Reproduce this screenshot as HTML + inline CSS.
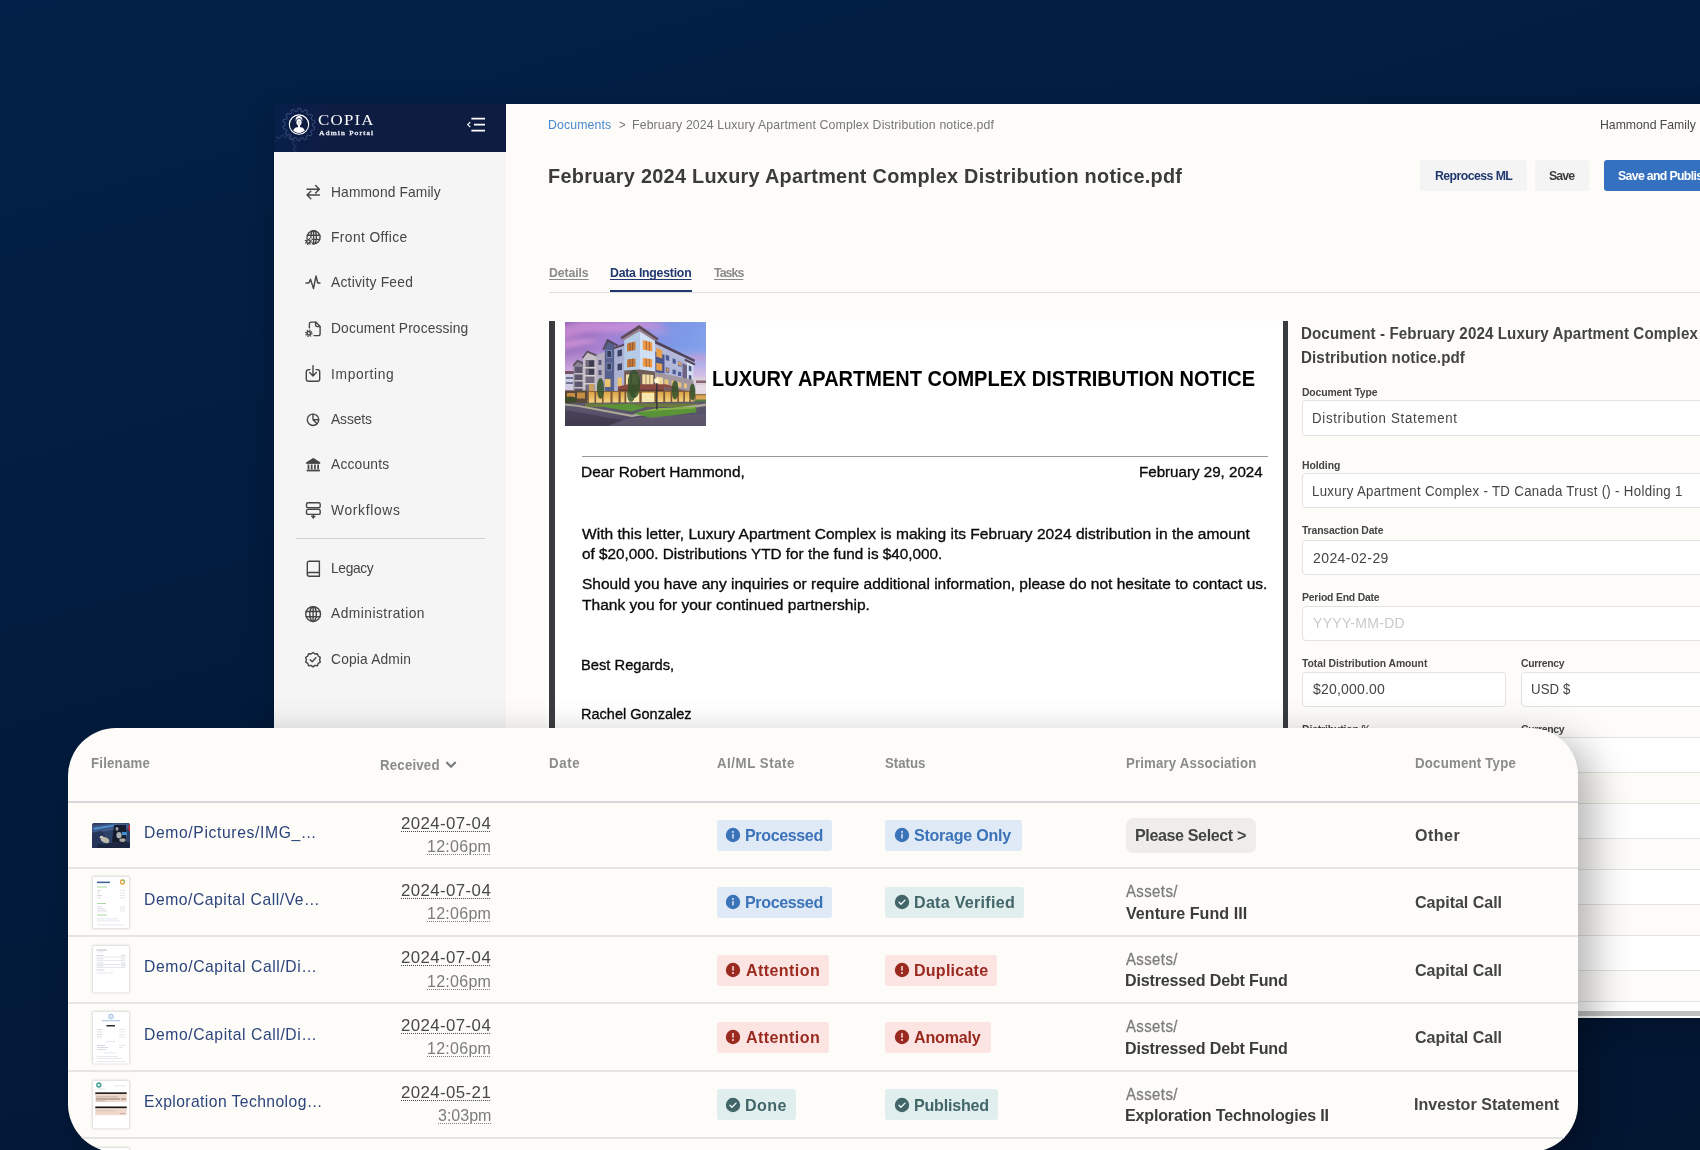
<!DOCTYPE html>
<html lang="en"><head><meta charset="utf-8"><title>Copia Admin Portal</title>
<style>
*{box-sizing:border-box}
html,body{margin:0;padding:0}
body{width:1700px;height:1150px;overflow:hidden;position:relative;font-family:"Liberation Sans",Arial,sans-serif;
 background:linear-gradient(164deg,#022047 0%,#031632 100%)}
.a{position:absolute;white-space:nowrap;display:block;line-height:1;font-weight:400;margin:0;transform-origin:0 50%}
.sf{font-family:"Liberation Serif","Times New Roman",serif}
.abs{position:absolute}
a{text-decoration:none}
#app{position:absolute;left:274px;top:104px;width:1500px;height:913.8px;background:#fdfcf8;overflow:hidden;box-shadow:0 10px 28px rgba(0,0,8,.2)}
#side{position:absolute;left:0;top:0;width:232px;height:913px;background:#f5f5f5}
#brand{position:absolute;left:0;top:0;width:232px;height:47.5px;background:linear-gradient(96deg,#05204a 0,#0b1e47 10%,#0e1c42 24%,#0e1c42 100%);overflow:hidden}
.inp{position:absolute;background:#fff;border:1px solid #e2e2e0;border-radius:4px;height:35px}
.btn{position:absolute;border-radius:3px;height:31px;top:56px}
#card{position:absolute;left:68px;top:728px;width:1510px;height:424px;background:#fdfcf8;border-radius:48px;overflow:hidden}
#cardshadow{position:absolute;left:68px;top:728px;width:1510px;height:424px;border-radius:48px;box-shadow:15px 11px 38px rgba(0,0,5,.29)}
.row{position:absolute;left:0;width:1510px;height:2px;background:#e5e5e3}
.badge{position:absolute;height:31px;border-radius:3px}
.dp{-webkit-text-stroke:.32px #0a0a0a}
.u{text-decoration:underline;text-underline-offset:2px}
.du{text-decoration:underline dotted;text-decoration-thickness:1.2px;text-underline-offset:2px}
</style></head>
<body>
<div id="app">
<aside id="side">
<header id="brand">
<svg class="abs" style="left:2px;top:-2px" width="46" height="50" viewBox="0 0 46 50">
<g fill="none" stroke="#3b4d7c" stroke-width="1.1" stroke-linejoin="round">
<path d="M36.5 24.0L38.9 25.5L38.4 27.8L35.5 28.0L34.6 29.7L36.1 32.1L34.6 33.9L31.9 32.9L30.4 34.0L30.7 36.9L28.5 37.8L26.6 35.7L24.7 36.1L23.7 38.8L21.4 38.7L20.6 36.0L18.7 35.5L16.6 37.5L14.5 36.4L15.0 33.6L13.5 32.3L10.8 33.2L9.4 31.4L11.0 29.0L10.2 27.2L7.4 26.9L6.9 24.6L9.4 23.2L9.5 21.2L7.1 19.7L7.6 17.4L10.5 17.2L11.4 15.5L9.9 13.1L11.4 11.3L14.1 12.3L15.6 11.2L15.3 8.3L17.5 7.4L19.4 9.5L21.3 9.1L22.3 6.4L24.6 6.5L25.4 9.2L27.3 9.7L29.4 7.7L31.5 8.8L31.0 11.6L32.5 12.9L35.2 12.0L36.6 13.8L35.0 16.2L35.8 18.0L38.6 18.3L39.1 20.6L36.6 22.0z" opacity=".8"/>
<path d="M17.4 48.0L19.3 49.7L18.4 51.6L15.9 51.3L14.8 52.6L15.6 55.0L13.9 56.3L11.9 54.7L10.3 55.3L9.7 57.8L7.6 58.0L6.7 55.7L5.0 55.4L3.3 57.3L1.4 56.4L1.7 53.9L0.4 52.8L-2.0 53.6L-3.3 51.9L-1.7 49.9L-2.3 48.3L-4.8 47.7L-5.0 45.6L-2.7 44.7L-2.4 43.0L-4.3 41.3L-3.4 39.4L-0.9 39.7L0.2 38.4L-0.6 36.0L1.1 34.7L3.1 36.3L4.7 35.7L5.3 33.2L7.4 33.0L8.3 35.3L10.0 35.6L11.7 33.7L13.6 34.6L13.3 37.1L14.6 38.2L17.0 37.4L18.3 39.1L16.7 41.1L17.3 42.7L19.8 43.3L20.0 45.4L17.7 46.3z" opacity=".5"/>
</g>
<circle cx="23" cy="22.6" r="9.7" fill="#0e1c42" stroke="#fff" stroke-width="1.1"/>
<g fill="#fff">
<ellipse cx="23" cy="20.2" rx="2.6" ry="3.3"/>
<path d="M19.6 19.2c-.4-3.4 1.2-5.2 3.4-5.2s3.8 1.8 3.4 5.2c-.6-2-1.7-3-3.4-3s-2.800 1-3.400 3z"/>
<path d="M17.2 28.600c.8-2.700 2.900-3.700 5.800-3.700s5 1 5.800 3.700c-1.600 1.500-3.600 2.300-5.800 2.300s-4.200-.8-5.800-2.300z"/>
<rect x="22" y="23" width="2" height="2.600"/>
</g>
<g stroke="#0e1c42" stroke-width=".5" fill="none"><path d="M21.8 19.800h.9M23.500 19.800h.9M22.400 21.800h1.300"/></g>
</svg>
<span class="a sf" style="left:44.15px;top:8.09px;font-size:15.3px;color:#fbfbfd;letter-spacing:1.1px;transform:scaleX(1.1042);">COPIA</span>
<span class="a sf" style="left:45.35px;top:25.54px;font-size:7px;color:#f3f4f8;letter-spacing:1.035px;transform:scaleX(1.1000);-webkit-text-stroke:.3px #f3f4f8;">Admin Portal</span>
<svg class="abs" style="left:192px;top:12px" width="22" height="18" viewBox="0 0 22 18">
<g stroke="#fff" stroke-width="1.7" fill="none"><path d="M5.4 2.600H19M8 8.600H19M5.4 14.600H19"/><path d="M4.300 6.200L1.700 8.600l2.600 2.400" stroke-width="1.100"/></g></svg>
</header>
<nav>
<svg class="abs" style="left:31.2px;top:80.4px" width="16" height="16" viewBox="0 0 16 16" overflow="visible" fill="none" stroke="#454545" stroke-width="1.4" stroke-linecap="round" stroke-linejoin="round"><path d="M2 5.300h12.400M10.600 1.500l3.800 3.800-3.800 3.800M14.400 11H2M5.800 7.200L2 11l3.800 3.800"/></svg>
<a class="a" style="left:56.51px;top:80.64px;font-size:14.6px;color:#454545;letter-spacing:0.131px;transform:scaleX(0.9450);">Hammond Family</a>
<svg class="abs" style="left:31.2px;top:126.0px" width="16" height="16" viewBox="0 0 16 16" overflow="visible" fill="none" stroke="#454545" stroke-width="1.4" stroke-linecap="round" stroke-linejoin="round"><circle cx="8.600" cy="7.300" r="6.500"/><ellipse cx="8.600" cy="7.300" rx="2.800" ry="6.500"/><path d="M2.600 5.200h12M2.600 9.400h12M8.600 .8v13"/><circle cx="3.400" cy="11.400" r="4" fill="#f5f5f5" stroke="none"/><circle cx="3.400" cy="11.400" r="2.500" fill="#454545" stroke="none"/><circle cx="3.400" cy="11.400" r="3.100" fill="none" stroke="#454545" stroke-width="1.300" stroke-dasharray="1.220 1.215" stroke-linecap="butt"/><circle cx="3.400" cy="11.400" r=".95" fill="#f5f5f5" stroke="none"/></svg>
<a class="a" style="left:56.51px;top:126.24px;font-size:14.6px;color:#454545;letter-spacing:0.429px;transform:scaleX(0.9450);">Front Office</a>
<svg class="abs" style="left:31.2px;top:171.2px" width="16" height="16" viewBox="0 0 16 16" overflow="visible" fill="none" stroke="#454545" stroke-width="1.4" stroke-linecap="round" stroke-linejoin="round"><path d="M1 8h2.800l1.700-3.800 3 9.400 2.500-12.600 1.800 7h2.200"/></svg>
<a class="a" style="left:57.45px;top:171.44px;font-size:14.6px;color:#454545;letter-spacing:0.253px;transform:scaleX(0.9450);">Activity Feed</a>
<svg class="abs" style="left:31.2px;top:216.8px" width="16" height="16" viewBox="0 0 16 16" overflow="visible" fill="none" stroke="#454545" stroke-width="1.4" stroke-linecap="round" stroke-linejoin="round"><path d="M4.400 6.800V3c0-1.100.800-1.900 1.900-1.900h4.500l4.300 4.300v7.300c0 1.100-.8 1.900-1.900 1.900H9"/><path d="M10.600 1.300v2.800c0 .9.600 1.500 1.500 1.500h2.800"/><circle cx="3.800" cy="12.300" r="4" fill="#f5f5f5" stroke="none"/><circle cx="3.800" cy="12.300" r="2.500" fill="#454545" stroke="none"/><circle cx="3.800" cy="12.300" r="3.100" fill="none" stroke="#454545" stroke-width="1.300" stroke-dasharray="1.220 1.215" stroke-linecap="butt"/><circle cx="3.800" cy="12.300" r=".95" fill="#f5f5f5" stroke="none"/></svg>
<a class="a" style="left:56.51px;top:217.04px;font-size:14.6px;color:#454545;letter-spacing:0.132px;transform:scaleX(0.9450);">Document Processing</a>
<svg class="abs" style="left:31.2px;top:262.4px" width="16" height="16" viewBox="0 0 16 16" overflow="visible" fill="none" stroke="#454545" stroke-width="1.4" stroke-linecap="round" stroke-linejoin="round"><path d="M5 3.600H3.600C2.200 3.600 1.300 4.500 1.300 5.900v7c0 1.400.9 2.300 2.300 2.300h8.800c1.400 0 2.300-.9 2.300-2.300v-7c0-1.400-.9-2.300-2.300-2.300H11"/><path d="M8-.3v9.800M4.700 6.600L8 9.900l3.300-3.300"/></svg>
<a class="a" style="left:56.51px;top:262.64px;font-size:14.6px;color:#454545;letter-spacing:0.696px;transform:scaleX(0.9450);">Importing</a>
<svg class="abs" style="left:31.2px;top:308.1px" width="16" height="16" viewBox="0 0 16 16" overflow="visible" fill="none" stroke="#454545" stroke-width="1.4" stroke-linecap="round" stroke-linejoin="round"><circle cx="8" cy="7.800" r="5.700"/><path d="M8 2.100v5.700l4 4M8 7.800h5.700"/></svg>
<a class="a" style="left:57.45px;top:308.34px;font-size:14.6px;color:#454545;letter-spacing:-0.087px;transform:scaleX(0.9450);">Assets</a>
<svg class="abs" style="left:31.2px;top:353.0px" width="16" height="16" viewBox="0 0 16 16" overflow="visible" fill="none" stroke="#454545" stroke-width="1.4" stroke-linecap="round" stroke-linejoin="round"><path d="M1.700 5.400L8.300 1.300l6.600 4.100v1.100H1.700z" fill="#454545" stroke-width=".8"/><path d="M3.500 7.400v4.800M6.700 7.400v4.800M9.900 7.400v4.800M13.100 7.400v4.800" stroke-width="1.700" stroke-linecap="butt"/><path d="M1.700 13.500h13.200" stroke-width="1.800" stroke-linecap="butt"/></svg>
<a class="a" style="left:57.45px;top:353.24px;font-size:14.6px;color:#454545;letter-spacing:0.219px;transform:scaleX(0.9450);">Accounts</a>
<svg class="abs" style="left:31.2px;top:398.6px" width="16" height="16" viewBox="0 0 16 16" overflow="visible" fill="none" stroke="#454545" stroke-width="1.4" stroke-linecap="round" stroke-linejoin="round"><rect x="1.500" y="-.2" width="13.700" height="5" rx="1.500"/><rect x="1.500" y="6.400" width="13.700" height="5" rx="1.500"/><path d="M8.300 11.500v3.300"/><path d="M6.300 13.300l2 2.200 2-2.200z" fill="#454545" stroke-width=".6"/></svg>
<a class="a" style="left:57.45px;top:398.84px;font-size:14.6px;color:#454545;letter-spacing:0.731px;transform:scaleX(0.9450);">Workflows</a>
<svg class="abs" style="left:31.2px;top:456.5px" width="16" height="16" viewBox="0 0 16 16" overflow="visible" fill="none" stroke="#454545" stroke-width="1.4" stroke-linecap="round" stroke-linejoin="round"><path d="M2.300 13.200V2c0-1.100.7-1.800 1.800-1.800h10.300v11.300H4.200c-1.100 0-1.900.7-1.900 1.800s.8 1.900 1.900 1.900h10.200"/><path d="M14.400 11.500v3.700"/></svg>
<a class="a" style="left:56.51px;top:456.74px;font-size:14.6px;color:#454545;letter-spacing:-0.36px;transform:scaleX(0.9450);">Legacy</a>
<svg class="abs" style="left:31.2px;top:502.0px" width="16" height="16" viewBox="0 0 16 16" overflow="visible" fill="none" stroke="#454545" stroke-width="1.4" stroke-linecap="round" stroke-linejoin="round"><circle cx="8.100" cy="8.100" r="7.400"/><ellipse cx="8.100" cy="8.100" rx="3.300" ry="7.400"/><path d="M1.300 5.500h13.600M1.300 10.700h13.600M8.100 .7v14.800"/></svg>
<a class="a" style="left:57.45px;top:502.24px;font-size:14.6px;color:#454545;letter-spacing:0.498px;transform:scaleX(0.9450);">Administration</a>
<svg class="abs" style="left:31.2px;top:547.6px" width="16" height="16" viewBox="0 0 16 16" overflow="visible" fill="none" stroke="#454545" stroke-width="1.4" stroke-linecap="round" stroke-linejoin="round"><path d="M8 .5l2 1.500 2.400-.3.800 2.300 2.100 1.300-.7 2.400.7 2.400-2.100 1.300-.8 2.300-2.400-.3L8 14.900l-2-1.500-2.400.3-.8-2.300L.7 10.100l.7-2.400-.7-2.400 2.100-1.300.8-2.300L6 2z"/><path d="M5.200 7.700l2 2 3.700-3.900"/></svg>
<a class="a" style="left:57.45px;top:547.84px;font-size:14.6px;color:#454545;letter-spacing:0.181px;transform:scaleX(0.9450);">Copia Admin</a>
<div class="abs" style="left:22px;top:433.5px;width:189px;height:1px;background:#cfcfcf"></div>
</nav>
</aside>
<main>
<nav class="crumbs">
<a class="a" style="left:274.2px;top:14.4px;font-size:13px;color:#4c88cf;letter-spacing:0.15px;transform:scaleX(0.9450);">Documents</a>
<span class="a" style="left:345.35px;top:15.04px;font-size:12px;color:#777;transform:scaleX(0.9450);">&gt;</span>
<span class="a" style="left:357.6px;top:14.4px;font-size:13px;color:#777;letter-spacing:0.155px;transform:scaleX(0.9450);">February 2024 Luxury Apartment Complex Distribution notice.pdf</span>
<span class="a" style="left:1325.8px;top:14.4px;font-size:13px;color:#4a4a4a;letter-spacing:-0.031px;transform:scaleX(0.9450);">Hammond Family</span>
</nav>
<h1 class="a" style="left:274.2px;top:60.72px;font-size:21px;font-weight:700;color:#3b3b3b;letter-spacing:0.298px;transform:scaleX(0.9450);">February 2024 Luxury Apartment Complex Distribution notice.pdf</h1>
<div class="btn" style="left:1146px;width:107px;background:#f4f4f4"></div>
<span class="a" style="left:1160.85px;top:64.7px;font-size:13px;font-weight:700;color:#21386f;letter-spacing:-0.59px;transform:scaleX(0.9450);">Reprocess ML</span>
<div class="btn" style="left:1260.7px;width:54.5px;background:#f4f4f4"></div>
<span class="a" style="left:1274.65px;top:64.7px;font-size:13px;font-weight:700;color:#3b3b3b;letter-spacing:-0.908px;transform:scaleX(0.9450);">Save</span>
<div class="btn" style="left:1329.5px;width:140px;background:#3571c1"></div>
<span class="a" style="left:1343.75px;top:64.7px;font-size:13px;font-weight:700;color:#fff;letter-spacing:-0.698px;transform:scaleX(0.9450);">Save and Publish</span>
<a class="a u" style="left:275.15px;top:162.4px;font-size:13px;font-weight:700;color:#8a8a8a;letter-spacing:-0.103px;transform:scaleX(0.9450);">Details</a>
<a class="a u" style="left:336.45px;top:162.4px;font-size:13px;font-weight:700;color:#21386f;letter-spacing:-0.244px;transform:scaleX(0.9450);">Data Ingestion</a>
<a class="a u" style="left:439.95px;top:162.4px;font-size:13px;font-weight:700;color:#8a8a8a;letter-spacing:-0.981px;transform:scaleX(0.9450);">Tasks</a>
<div class="abs" style="left:275px;top:188.0px;width:1200px;height:1px;background:#dedede"></div>
<div class="abs" style="left:336.3px;top:185.7px;width:82px;height:2.5px;background:#21386f"></div>
<section class="doc">
<div class="abs" style="left:272px;top:216.8px;width:740px;height:420px;background:#fff"></div>
<div class="abs" style="left:275px;top:217.2px;width:6px;height:420px;background:#3b3c3f"></div>
<div class="abs" style="left:1009px;top:217.2px;width:5px;height:420px;background:#393c3f"></div>
<svg class="abs" style="left:291px;top:218px" width="141" height="104" viewBox="0 0 141 104">
<defs>
<linearGradient id="sky" x1="0" y1="0" x2="1" y2=".35"><stop offset="0" stop-color="#8f62b2"/><stop offset=".3" stop-color="#a67fd0"/><stop offset=".55" stop-color="#8590e0"/><stop offset=".8" stop-color="#7d9ae8"/><stop offset="1" stop-color="#86a2ec"/></linearGradient>
<linearGradient id="hz" x1="0" y1="0" x2="0" y2="1"><stop offset="0" stop-color="#e2bfe4" stop-opacity="0"/><stop offset=".75" stop-color="#e4c4e6" stop-opacity=".95"/><stop offset="1" stop-color="#ecd2e8"/></linearGradient>
<linearGradient id="rd" x1="0" y1="0" x2="0" y2="1"><stop offset="0" stop-color="#5f596b"/><stop offset=".5" stop-color="#57516a"/><stop offset="1" stop-color="#413c50"/></linearGradient>
<linearGradient id="shop" x1="0" y1="0" x2="0" y2="1"><stop offset="0" stop-color="#dca244"/><stop offset="1" stop-color="#f5da8c"/></linearGradient>
<filter id="b1" x="-5%" y="-5%" width="110%" height="110%"><feGaussianBlur stdDeviation=".62"/></filter>
<filter id="b2" x="-20%" y="-20%" width="140%" height="140%"><feGaussianBlur stdDeviation="2.200"/></filter>
<clipPath id="pc"><rect width="141" height="104"/></clipPath>
</defs>
<g clip-path="url(#pc)">
<rect width="141" height="104" fill="url(#sky)"/>
<g filter="url(#b2)">
<path d="M-4 6c10-6 26-8 42-5 12 2 22-2 36-2 12 0 20 3 30 6-12 1-22 2-34 4-16 3-30-1-44 1-12 2-20 5-30 9z" fill="#cf92d8" opacity=".75"/>
<path d="M-4 20c12-4 26-4 40-1-12 3-26 5-40 10z" fill="#d99ad8" opacity=".7"/>
<path d="M84 9c8-2 16-1 22 1-6 2-14 3-22 2z" fill="#c79be0" opacity=".6"/>
<path d="M118 36c8-3 16-4 24-3v5c-8 0-16 1-24 2z" fill="#b78fd0" opacity=".8"/>
<rect x="-4" y="26" width="150" height="42" fill="url(#hz)"/>
</g>
<g filter="url(#b1)">
<path d="M-1 50.500h10.500V68H-1z" fill="#cfcbe0"/><path d="M-1 49h11v3H-1z" fill="#6f5265"/>
<path d="M1 55h7v2H1zM1 60h7v2H1z" fill="#6e7596"/>
<path d="M128 55h14v26h-14z" fill="#d9cfdc"/><path d="M131 58.500h11v2.500h-11z" fill="#8a6670"/><path d="M131 63h10v8h-10z" fill="#e6dbe2"/>
<path d="M8.600 41l4-3.500 6 2.500V80H8.600z" fill="#8a8497"/>
<path d="M7.600 43.500l4.800-5.800 7.800 3.600-.6 1.700-7-3-3.800 4.600z" fill="#5b4f63"/>
<path d="M10 45h7v33h-7z" fill="#5a566c"/><path d="M9.500 51h8.500v1.500H9.500zM9.500 58h8.500v1.500H9.500zM9.500 65h8.500v1.500H9.500z" fill="#c9c1c6"/>
<path d="M18 34l4.500-5 9.500 4v47H18z" fill="#c7bfc8"/>
<path d="M16.600 35.800l5.600-7.400 12 5-.7 1.800-11-4.400-4.400 5.800z" fill="#5c4f60"/>
<path d="M20.500 38h9v40h-9z" fill="#726b7c"/><path d="M19.500 45h11v1.600h-11zM19.500 53h11v1.600h-11zM19.500 61h11v1.600h-11z" fill="#d8cfd0"/>
<path d="M24 38.500h5v6h-5zM24 47h5v5.500h-5z" fill="#3c3a50"/>
<path d="M31.500 33l8.500-3.500V80h-8.500z" fill="#b3adbf"/>
<path d="M33.500 38h3v5h-3zM33.500 48h3v5h-3z" fill="#55577a"/>
<path d="M39.800 26l2.700-7.500 7 4.500V80h-9.700z" fill="#57608c"/>
<path d="M37.300 27.500l5-10.700 10.700 6-.8 1.800-9.400-5.200-3.800 8.600z" fill="#4f4558"/>
<path d="M41.500 28h5.500v8h-5.500zM41.500 40.500h5.500v8h-5.500z" fill="#7f8cb8"/><path d="M42.300 29h3.800v6h-3.800zM42.300 41.500h3.800v6h-3.800z" fill="#343a5c"/>
<path d="M49.300 26l10-3V80h-10z" fill="#a9b0d2"/>
<path d="M48.500 25.300l11-3.800v2.200l-11 3.600z" fill="#5a4c5c"/>
<path d="M52.500 28.500l4.500-1.300v6.500l-4.500 1zM52.500 42l4.500-.8v6.500l-4.500.8z" fill="#3a4266"/>
<path d="M59.200 17.500L74.600 7.500v41.500l-15.400 1z" fill="#b4cce6"/>
<path d="M74.600 7.500L90 18.500V50l-15.400-1z" fill="#cfe0f5"/>
<path d="M55.300 15.300L74.200 3 93.600 16.600l-1.300 1.900L74.300 7 56.700 17.300z" fill="#5d4b57"/>
<path d="M57.300 17.200L74.300 6.600l17.600 11.900-.9 1.300-16.700-10.600-16 9.500z" fill="#9a828c"/>
<path d="M62 21.400l8.500-2v8.400l-8.500 1.600zM62 37.400l8.500-1v8l-8.500 1z" fill="#c77b3c"/>
<path d="M64.600 20.800l.7-.2v8.400l-.7.200zM67.400 20.200l.7-.2v8.400l-.7.200zM64.600 37l.7-.1v8l-.7.100zM67.400 36.700l.7-.1v8l-.7.100z" fill="#7d4a2c"/>
<path d="M77.800 18l9.500 2.600v9L77.800 27.500zM77.800 36l9.500 1.200v8.200L77.800 44.600z" fill="#ee9a46"/>
<path d="M80.800 18.800l.8.200v9l-.8-.2zM83.900 19.600l.8.200v9l-.8-.2zM80.800 36.400l.8.100v8.200l-.8-.1zM83.900 36.800l.8.100v8.200l-.8-.1z" fill="#9a5a30"/>
<path d="M90 20.300l38.400 19V80H90z" fill="#b3b7d9"/>
<path d="M90 18.300l40 19.400-.8 2.300L90 21.500z" fill="#51455a"/>
<path d="M90.400 29.500l9.100 3.500v18.500l-9.100-1z" fill="#49558d"/>
<path d="M91.300 25.800l5.900 2.400v8.200l-5.900-1.800zM91.300 40.700l5.900 1.200v7l-5.900-.8z" fill="#e9a04c"/>
<path d="M100.800 32.500l3.400 1.400v5.200l-3.400-1zM107.600 36.200l3.200 1.300v4.600l-3.200-.9zM113 39l3.400 1.400v4.400L113 43.900zM100.800 45.300l3.400.7v5l-3.400-.6zM107.600 47.400l3.200.6v4.500l-3.200-.5zM113 49.600l3.200.6v4l-3.200-.5zM101.500 58.500h3.500v4.800h-3.500z" fill="#4b5a92"/>
<path d="M113.300 39.400l2.800 1.100v3.400l-2.800-.8zM101.600 46l2 .4v3.600l-2-.3z" fill="#d9a25c"/>
<path d="M117.500 41l4.500 2.200V70h-4.500z" fill="#6e6585"/>
<path d="M122 38.500l6.400 3V72H122z" fill="#d5def0"/>
<path d="M120 36.600l10.300 4.800-.7 2L119.600 38.800z" fill="#54475a"/>
<path d="M123.800 43.500l2.600 1v5l-2.600-.7zM123.800 53l2.600.5v5l-2.600-.4z" fill="#4a5580"/>
<path d="M59.200 48.500l15.400-1L90 49.500V66H59.200z" fill="#6d5c58"/>
<path d="M90 50l38.400 8v12H90z" fill="#a2969f"/><path d="M99.500 57l4 .8v6l-4-.5zM106.500 58.500l3.500.7v5.300l-3.500-.4zM113 60l3.300.6v4.800l-3.300-.4zM119 61.200l3 .6v4.400l-3-.4z" fill="#e6c27a"/>
<path d="M61 52.500h4.200v10.800H61zM67 52h6v11.300h-6z" fill="#f1dfa6"/>
<path d="M77.300 52.300l11 .7v10.300h-11z" fill="#f3e0a8"/>
<path d="M80.600 52.500l.7.100v10.700h-.7zM84.500 52.800l.7.100v10.400h-.7z" fill="#8d6e50"/>
<path d="M91.500 54.500l6.500 1.300v8.700l-6.500-.6z" fill="#f0d79a"/>
<path d="M40 57h5.500v8H40zM52.500 55.500h4.500v8.500h-4.500z" fill="#e9c36d"/>
<path d="M24 62h5v8h-5z" fill="#caa05e"/>
<path d="M53 64.500l10-2.200h37.500l12 3.200v3.200H53z" fill="#8b4a42"/>
<path d="M53 67.600h60v1.600H53z" fill="#5e3a36"/>
<path d="M99 64l29.400 6v3.500L99 69z" fill="#7a5a5a"/>
<path d="M0 68.500h22.600V82H0z" fill="#59493b"/>
<path d="M2 71h8v4.500H2zM12 70.500h8v6h-8z" fill="#c78e42"/>
<path d="M22.600 69h107V82h-107z" fill="#8a643a"/>
<path d="M24 70h104.500v11.600H24z" fill="url(#shop)"/>
<g fill="#7a5634"><path d="M29.500 69.500h1.600V82h-1.600zM37 69.500h1.600V82H37zM45.500 69.500h2V82h-2zM53.500 69.500h2.200V82h-2.200zM59.500 69.500h2V82h-2zM74.200 69.500h2.600V82h-2.600zM89.300 69.500h2.400V82h-2.400zM98.300 69.500h1.800V82h-1.800zM105.600 69.500h1.600V82h-1.600zM112.300 69.500h1.600V82h-1.600zM118.300 69.500h1.600V82h-1.600zM124.300 69.500h1.500V82h-1.500z"/></g>
<path d="M61.500 71h12.700v9.500H61.500zM76.800 71h12.500v9.500H76.800z" fill="#f7e6ae"/>
<path d="M130 72h12v10h-12z" fill="#9b7a44"/><path d="M131 73.500h10v5h-10z" fill="#dba654"/>
<path d="M130 77.500h12v6h-12z" fill="#56803a"/>
</g>
<g filter="url(#b1)" fill="#36522b">
<ellipse cx="35.500" cy="66.500" rx="3.600" ry="10.500" opacity=".88"/>
<ellipse cx="69" cy="62" rx="6.200" ry="14" opacity=".9"/><ellipse cx="66" cy="72" rx="4" ry="8" opacity=".8"/>
<ellipse cx="110" cy="68" rx="3.400" ry="9.500" opacity=".88"/>
<ellipse cx="127.500" cy="70" rx="2.900" ry="8.500" opacity=".88"/>
<ellipse cx="5" cy="78" rx="7" ry="3.500" fill="#3d4a2c"/>
</g>
<g filter="url(#b1)">
<path d="M-1 81l142-1.500V105H-1z" fill="url(#rd)"/>
<path d="M20 81.500h112v3.500H20z" fill="#6c7a3c"/>
<path d="M-1 81.600l14 1.300 54 9.800 12-2.600L141 81.500v2.600l-62 9-12.500 2-54-10.400L-1 83.500z" fill="#aca896"/>
<path d="M30 83.500l38-1.500 12 3.500-13.500 4zM68.500 91.200l23-4.800 39.500-1.600.5 5.400-45 6z" fill="#5a9337"/>
<path d="M72 90l20-3.800 38-1.400v1.800l-38 1.800z" fill="#86b24a"/>
<path d="M91.200 58.500h1.300v29h-1.300z" fill="#2c2832"/>
<path d="M60 97c20-3 50-3 82-5v13H40z" fill="#6b6579" opacity=".55"/>
<path d="M-1 88c18 2 40 8 60 10l-20 7H-1z" fill="#3c3749" opacity=".6"/>
</g>
<circle cx="91.800" cy="58.600" r="2.600" fill="#fff6cf" filter="url(#b1)"/>
</g>
</svg>
<h2 class="a" style="left:437.53px;top:263.75px;font-size:21.8px;font-weight:700;color:#000;transform:scaleX(0.9171);">LUXURY APARTMENT COMPLEX DISTRIBUTION NOTICE</h2>
<div class="abs" style="left:307.6px;top:351.6px;width:686px;height:1px;background:#9a9a9a"></div>
<p class="a dp" style="left:306.9px;top:361.06px;font-size:14.7px;color:#0a0a0a;transform:scaleX(1.0504);">Dear Robert Hammond,</p>
<p class="a dp" style="left:865.12px;top:361.06px;font-size:14.7px;color:#0a0a0a;transform:scaleX(1.0306);">February 29, 2024</p>
<p class="a dp" style="left:307.95px;top:422.56px;font-size:14.7px;color:#0a0a0a;transform:scaleX(1.0596);">With this letter, Luxury Apartment Complex is making its February 2024 distribution in the amount</p>
<p class="a dp" style="left:307.95px;top:443.26px;font-size:14.7px;color:#0a0a0a;transform:scaleX(1.0417);">of $20,000. Distributions YTD for the fund is $40,000.</p>
<p class="a dp" style="left:307.95px;top:473.26px;font-size:14.7px;color:#0a0a0a;transform:scaleX(1.0545);">Should you have any inquiries or require additional information, please do not hesitate to contact us.</p>
<p class="a dp" style="left:307.95px;top:493.86px;font-size:14.7px;color:#0a0a0a;transform:scaleX(1.0590);">Thank you for your continued partnership.</p>
<p class="a dp" style="left:306.95px;top:553.56px;font-size:14.7px;color:#0a0a0a;transform:scaleX(1.0015);">Best Regards,</p>
<p class="a dp" style="left:306.96px;top:603.36px;font-size:14.7px;color:#0a0a0a;transform:scaleX(0.9881);">Rachel Gonzalez</p>
</section>
<section class="panel">
<h3 class="a" style="left:1027.2px;top:221.86px;font-size:16px;font-weight:700;color:#444;letter-spacing:0.111px;transform:scaleX(0.9450);">Document - February 2024 Luxury Apartment Complex</h3>
<h3 class="a" style="left:1027.2px;top:245.96px;font-size:16px;font-weight:700;color:#444;letter-spacing:0.127px;transform:scaleX(0.9450);">Distribution notice.pdf</h3>
<label class="a" style="left:1028.15px;top:282.69px;font-size:11px;font-weight:700;color:#444;letter-spacing:-0.15px;transform:scaleX(0.9450);">Document Type</label>
<div class="inp" style="left:1028.0px;top:296.4px;width:500px;height:35.2px"></div>
<span class="a" style="left:1038.2px;top:307.15px;font-size:14px;color:#444;letter-spacing:0.75px;transform:scaleX(0.9450);">Distribution Statement</span>
<label class="a" style="left:1028.15px;top:355.69px;font-size:11px;font-weight:700;color:#444;letter-spacing:-0.072px;transform:scaleX(0.9450);">Holding</label>
<div class="inp" style="left:1028.0px;top:369.3px;width:500px;height:34.6px"></div>
<span class="a" style="left:1038.2px;top:379.75px;font-size:14px;color:#444;letter-spacing:0.348px;transform:scaleX(0.9450);">Luxury Apartment Complex - TD Canada Trust () - Holding 1</span>
<label class="a" style="left:1028.15px;top:421.39px;font-size:11px;font-weight:700;color:#444;letter-spacing:-0.166px;transform:scaleX(0.9450);">Transaction Date</label>
<div class="inp" style="left:1028.0px;top:435.7px;width:500px;height:35.0px"></div>
<span class="a" style="left:1039.15px;top:446.55px;font-size:14px;color:#444;letter-spacing:0.406px;transform:scaleX(1.0015);">2024-02-29</span>
<label class="a" style="left:1028.15px;top:487.69px;font-size:11px;font-weight:700;color:#444;letter-spacing:-0.202px;transform:scaleX(0.9450);">Period End Date</label>
<div class="inp" style="left:1028.0px;top:501.5px;width:500px;height:35.0px"></div>
<span class="a" style="left:1039.15px;top:512.35px;font-size:14px;color:#c9c9c9;letter-spacing:0.293px;transform:scaleX(1.0015);">YYYY-MM-DD</span>
<label class="a" style="left:1028.15px;top:553.69px;font-size:11px;font-weight:700;color:#444;letter-spacing:-0.074px;transform:scaleX(0.9450);">Total Distribution Amount</label>
<label class="a" style="left:1246.95px;top:553.69px;font-size:11px;font-weight:700;color:#444;letter-spacing:-0.314px;transform:scaleX(0.9450);">Currency</label>
<div class="inp" style="left:1028.0px;top:567.5px;width:204px;height:35.0px"></div>
<div class="inp" style="left:1246.8px;top:567.5px;width:300px;height:35.0px"></div>
<span class="a" style="left:1039.15px;top:578.45px;font-size:14px;color:#444;letter-spacing:0.177px;transform:scaleX(1.0015);">$20,000.00</span>
<span class="a" style="left:1257px;top:578.45px;font-size:14px;color:#444;letter-spacing:0.124px;transform:scaleX(0.9450);">USD $</span>
<label class="a" style="left:1028.15px;top:619.69px;font-size:11px;font-weight:700;color:#444;letter-spacing:-0.136px;transform:scaleX(0.9450);">Distribution %</label>
<label class="a" style="left:1246.95px;top:619.69px;font-size:11px;font-weight:700;color:#444;letter-spacing:-0.314px;transform:scaleX(0.9450);">Currency</label>
<div class="inp" style="left:1028.0px;top:633.0px;width:204px;height:36.0px"></div>
<div class="inp" style="left:1246.8px;top:633.0px;width:300px;height:36.0px"></div>
<div class="inp" style="left:1028.0px;top:699.0px;width:500px;height:36.0px"></div>
<div class="inp" style="left:1028.0px;top:765.1px;width:500px;height:36.0px"></div>
<div class="inp" style="left:1028.0px;top:831.1px;width:500px;height:36.0px"></div>
<div class="inp" style="left:1028.0px;top:897.2px;width:500px;height:36.0px"></div>
</section>
</main>
<div class="abs" style="left:0;top:906.6px;width:1500px;height:5.2px;background:#c0c0c0"></div><div class="abs" style="left:0;top:911.8px;width:1500px;height:2px;background:#fff"></div>
</div>
<div id="cardshadow"></div>
<section id="card">
<span class="a" style="left:23.45px;top:27.75px;font-size:14px;font-weight:700;color:#8b8b8b;letter-spacing:0.216px;transform:scaleX(0.9450);">Filename</span>
<span class="a" style="left:312.35px;top:29.75px;font-size:14px;font-weight:700;color:#8b8b8b;letter-spacing:0.214px;transform:scaleX(0.9450);">Received</span>
<svg class="abs" style="left:377.0px;top:33.4px" width="12" height="8" viewBox="0 0 12 8"><path d="M2 1.800l4 4 4-4" fill="none" stroke="#7c7c82" stroke-width="2.300" stroke-linecap="round" stroke-linejoin="round"/></svg>
<span class="a" style="left:480.75px;top:27.75px;font-size:14px;font-weight:700;color:#8b8b8b;letter-spacing:0.713px;transform:scaleX(0.9450);">Date</span>
<span class="a" style="left:649.15px;top:27.75px;font-size:14px;font-weight:700;color:#8b8b8b;letter-spacing:0.592px;transform:scaleX(0.9450);">AI/ML State</span>
<span class="a" style="left:817.45px;top:27.75px;font-size:14px;font-weight:700;color:#8b8b8b;letter-spacing:-0.029px;transform:scaleX(0.9450);">Status</span>
<span class="a" style="left:1058.15px;top:27.75px;font-size:14px;font-weight:700;color:#8b8b8b;letter-spacing:0.163px;transform:scaleX(0.9450);">Primary Association</span>
<span class="a" style="left:1346.65px;top:27.75px;font-size:14px;font-weight:700;color:#8b8b8b;letter-spacing:0.224px;transform:scaleX(0.9450);">Document Type</span>
<div class="row" style="top:73.0px;height:2px;background:#d6d6dc"></div>
<svg class="abs" style="left:23.7px;top:94.8px" width="38" height="25.4" viewBox="0 0 38 26" preserveAspectRatio="none"><defs><filter id="tb"><feGaussianBlur stdDeviation=".7"/></filter><clipPath id="tc"><rect width="38" height="26" rx="1.800"/></clipPath></defs><g clip-path="url(#tc)"><rect width="38" height="26" fill="#2d4066"/><g filter="url(#tb)"><path d="M-1 3l26-3 14 1v5l-16 1-24 4z" fill="#3f5a8a"/><path d="M2 5l22-3.500v1.300L2 6.600z" fill="#4fa0dc"/><path d="M22 2h12v18H20z" fill="#161d2e"/><path d="M30 9l5 .5v3l-5-.3z" fill="#3f8fd0"/><path d="M36.500 2h2v6h-2z" fill="#c8262c"/><path d="M0 10l10-2 4 8-8 10H0z" fill="#25345a"/><path d="M6 22l28-3 5 2v6H4z" fill="#1c2640"/><ellipse cx="13" cy="17.500" rx="4.500" ry="2.800" fill="#bcb8ac" transform="rotate(25 13 17.500)"/><ellipse cx="9.500" cy="14.500" rx="1.800" ry="1.500" fill="#c9c5ba"/><ellipse cx="27" cy="12.500" rx="2.600" ry="3.200" fill="#aeb0b2"/><ellipse cx="30.500" cy="17.500" rx="3.200" ry="2" fill="#a9a79f"/><ellipse cx="25" cy="6" rx="1.500" ry="2" fill="#9aa0a8"/></g></g></svg>
<a class="a" style="left:75.9px;top:96.55px;font-size:16.6px;color:#2c447c;letter-spacing:0.667px;transform:scaleX(0.9450);">Demo/Pictures/IMG_…</a>
<span class="a du" style="left:333.35px;top:87.58px;font-size:16.8px;color:#484848;letter-spacing:0.418px;transform:scaleX(1.0015);">2024-07-04</span>
<span class="a du" style="left:359.15px;top:110.96px;font-size:16px;color:#7c7c7c;letter-spacing:0.258px;transform:scaleX(1.0015);">12:06pm</span>
<div class="badge" style="left:649.0px;top:91.9px;width:115.0px;background:#e0eaf7"></div><svg class="abs" style="left:657.4px;top:99.3px" width="16" height="16" viewBox="0 0 16 16"><circle cx="8" cy="8" r="7.200" fill="#3b73b9"/><rect x="7.350" y="6.900" width="1.300" height="4.600" fill="#f4f8fd"/><circle cx="8" cy="4.900" r=".9" fill="#f4f8fd"/></svg><span class="a" style="left:677.21px;top:99.11px;font-size:17px;font-weight:700;color:#3b73b9;letter-spacing:-0.404px;transform:scaleX(0.9450);">Processed</span>
<div class="badge" style="left:817.3px;top:91.9px;width:136.5px;background:#e0eaf7"></div><svg class="abs" style="left:825.7px;top:99.3px" width="16" height="16" viewBox="0 0 16 16"><circle cx="8" cy="8" r="7.200" fill="#3b73b9"/><rect x="7.350" y="6.900" width="1.300" height="4.600" fill="#f4f8fd"/><circle cx="8" cy="4.900" r=".9" fill="#f4f8fd"/></svg><span class="a" style="left:846.45px;top:99.11px;font-size:17px;font-weight:700;color:#3b73b9;letter-spacing:-0.279px;transform:scaleX(0.9450);">Storage Only</span>
<div class="abs" style="left:1058px;top:89.9px;width:130px;height:35.6px;border-radius:7px;background:#eeede9"></div>
<span class="a" style="left:1066.8px;top:98.71px;font-size:17px;font-weight:700;color:#444;letter-spacing:-0.399px;transform:scaleX(0.9450);">Please Select &gt;</span>
<span class="a" style="left:1346.65px;top:98.71px;font-size:17px;font-weight:700;color:#444;letter-spacing:0.497px;transform:scaleX(0.9450);">Other</span>
<div class="row" style="top:139.0px"></div>
<svg class="abs" style="left:23.7px;top:148.4px;filter:drop-shadow(0 .5px .8px rgba(0,0,0,.13))" width="38" height="53.0" viewBox="0 0 38 53.0"><rect x=".5" y=".5" width="37" height="52.0" rx="1.500" fill="#fff" stroke="#e4e4e4"/><rect x="5" y="5.6" width="13" height="1.5" fill="#3f5f9a"/><circle cx="30.500" cy="6" r="2" fill="none" stroke="#eaa23c" stroke-width="1.300"/><path d="M30.500 4a2 2 0 0 1 1.900 2.600" fill="none" stroke="#7cc06a" stroke-width="1.300"/><rect x="5" y="10.5" width="10" height="1" fill="#a9d6a0"/><rect x="5" y="27" width="9" height="1" fill="#a9d6a0"/><rect x="5" y="38.5" width="10" height="1" fill="#a9d6a0"/><rect x="5" y="14" width="4" height="0.8" fill="#cfd3da"/><rect x="28" y="14" width="5" height="0.8" fill="#dfe2e7"/><rect x="5" y="16.5" width="3" height="0.8" fill="#cfd3da"/><rect x="28" y="16.5" width="5" height="0.8" fill="#dfe2e7"/><rect x="5" y="19" width="5" height="0.8" fill="#cfd3da"/><rect x="28" y="19" width="5" height="0.8" fill="#dfe2e7"/><rect x="5" y="21.5" width="4" height="0.8" fill="#cfd3da"/><rect x="28" y="21.5" width="5" height="0.8" fill="#dfe2e7"/><rect x="5" y="30.5" width="5" height="0.8" fill="#cfd3da"/><rect x="28" y="30.5" width="5" height="0.8" fill="#dfe2e7"/><rect x="5" y="32.5" width="8" height="0.8" fill="#cfd3da"/><rect x="28" y="32.5" width="5" height="0.8" fill="#dfe2e7"/><rect x="5" y="34.5" width="10" height="0.8" fill="#cfd3da"/><rect x="28" y="34.5" width="5" height="0.8" fill="#dfe2e7"/><rect x="5" y="42.5" width="21" height="0.8" fill="#dfe2e7"/><rect x="5" y="44.5" width="23" height="0.8" fill="#dfe2e7"/><rect x="5" y="48.5" width="27" height="0.8" fill="#dfe2e7"/></svg>
<a class="a" style="left:75.9px;top:163.65px;font-size:16.6px;color:#2c447c;letter-spacing:0.583px;transform:scaleX(0.9450);">Demo/Capital Call/Ve…</a>
<span class="a du" style="left:333.35px;top:154.68px;font-size:16.8px;color:#484848;letter-spacing:0.418px;transform:scaleX(1.0015);">2024-07-04</span>
<span class="a du" style="left:359.15px;top:178.06px;font-size:16px;color:#7c7c7c;letter-spacing:0.258px;transform:scaleX(1.0015);">12:06pm</span>
<div class="badge" style="left:649.0px;top:159.0px;width:115.0px;background:#e0eaf7"></div><svg class="abs" style="left:657.4px;top:166.4px" width="16" height="16" viewBox="0 0 16 16"><circle cx="8" cy="8" r="7.200" fill="#3b73b9"/><rect x="7.350" y="6.900" width="1.300" height="4.600" fill="#f4f8fd"/><circle cx="8" cy="4.900" r=".9" fill="#f4f8fd"/></svg><span class="a" style="left:677.21px;top:166.21px;font-size:17px;font-weight:700;color:#3b73b9;letter-spacing:-0.404px;transform:scaleX(0.9450);">Processed</span>
<div class="badge" style="left:817.3px;top:159.0px;width:138.5px;background:#e0eeed"></div><svg class="abs" style="left:825.7px;top:166.4px" width="16" height="16" viewBox="0 0 16 16"><circle cx="8" cy="8" r="7.200" fill="#42656a"/><path d="M5 8.300l2 2 4-4.200" fill="none" stroke="#f2fafa" stroke-width="1.350" stroke-linecap="round" stroke-linejoin="round"/></svg><span class="a" style="left:845.5px;top:166.21px;font-size:17px;font-weight:700;color:#42656a;letter-spacing:0.307px;transform:scaleX(0.9450);">Data Verified</span>
<span class="a" style="left:1058.15px;top:156.43px;font-size:15.8px;color:#7d7d7d;letter-spacing:0.436px;transform:scaleX(0.9450);-webkit-text-stroke:.3px #7d7d7d;">Assets/</span>
<span class="a" style="left:1058.15px;top:176.61px;font-size:17px;font-weight:700;color:#3c3c3c;letter-spacing:0.048px;transform:scaleX(0.9450);">Venture Fund III</span>
<span class="a" style="left:1346.65px;top:165.81px;font-size:17px;font-weight:700;color:#444;letter-spacing:-0.04px;transform:scaleX(0.9450);">Capital Call</span>
<div class="row" style="top:207.0px"></div>
<svg class="abs" style="left:23.7px;top:217.0px;filter:drop-shadow(0 .5px .8px rgba(0,0,0,.13))" width="38" height="48.4" viewBox="0 0 38 48.4"><rect x=".5" y=".5" width="37" height="47.4" rx="1.500" fill="#fff" stroke="#e4e4e4"/><rect x="4.5" y="4.5" width="10" height="1" fill="#b7bcc6"/><rect x="4.5" y="6.5" width="7" height="0.8" fill="#dfe2e7"/><rect x="4.5" y="10" width="7" height="0.8" fill="#cfd3da"/><rect x="4.5" y="11.6" width="29" height="0.8" fill="#dfe2e7"/><rect x="29" y="10" width="4.5" height="0.8" fill="#cfd3da"/><rect x="4.5" y="13.5" width="7" height="0.8" fill="#cfd3da"/><rect x="4.5" y="15.1" width="29" height="0.8" fill="#dfe2e7"/><rect x="29" y="13.5" width="4.5" height="0.8" fill="#cfd3da"/><rect x="4.5" y="17.5" width="7" height="0.8" fill="#cfd3da"/><rect x="4.5" y="19.1" width="29" height="0.8" fill="#dfe2e7"/><rect x="29" y="17.5" width="4.5" height="0.8" fill="#cfd3da"/><rect x="4.5" y="20.5" width="7" height="0.8" fill="#cfd3da"/><rect x="4.5" y="22.1" width="29" height="0.8" fill="#dfe2e7"/><rect x="29" y="20.5" width="4.5" height="0.8" fill="#cfd3da"/><rect x="4.5" y="24.5" width="8" height="1" fill="#cfd3da"/><rect x="4.5" y="27.5" width="17" height="0.8" fill="#dfe2e7"/></svg>
<a class="a" style="left:75.9px;top:231.35px;font-size:16.6px;color:#2c447c;letter-spacing:0.626px;transform:scaleX(0.9450);">Demo/Capital Call/Di…</a>
<span class="a du" style="left:333.35px;top:222.38px;font-size:16.8px;color:#484848;letter-spacing:0.418px;transform:scaleX(1.0015);">2024-07-04</span>
<span class="a du" style="left:359.15px;top:245.76px;font-size:16px;color:#7c7c7c;letter-spacing:0.258px;transform:scaleX(1.0015);">12:06pm</span>
<div class="badge" style="left:649.0px;top:226.7px;width:112.4px;background:#fce4e3"></div><svg class="abs" style="left:657.4px;top:234.1px" width="16" height="16" viewBox="0 0 16 16"><circle cx="8" cy="8" r="7.200" fill="#9a2a20"/><rect x="7.300" y="4" width="1.400" height="4.800" rx=".6" fill="#fff3f1"/><circle cx="8" cy="11" r=".95" fill="#fff3f1"/></svg><span class="a" style="left:678.15px;top:233.91px;font-size:17px;font-weight:700;color:#9a2a20;letter-spacing:0.432px;transform:scaleX(0.9450);">Attention</span>
<div class="badge" style="left:817.3px;top:226.7px;width:111.7px;background:#fce4e3"></div><svg class="abs" style="left:825.7px;top:234.1px" width="16" height="16" viewBox="0 0 16 16"><circle cx="8" cy="8" r="7.200" fill="#9a2a20"/><rect x="7.300" y="4" width="1.400" height="4.800" rx=".6" fill="#fff3f1"/><circle cx="8" cy="11" r=".95" fill="#fff3f1"/></svg><span class="a" style="left:845.5px;top:233.91px;font-size:17px;font-weight:700;color:#9a2a20;letter-spacing:0.232px;transform:scaleX(0.9450);">Duplicate</span>
<span class="a" style="left:1058.15px;top:224.13px;font-size:15.8px;color:#7d7d7d;letter-spacing:0.436px;transform:scaleX(0.9450);-webkit-text-stroke:.3px #7d7d7d;">Assets/</span>
<span class="a" style="left:1057.2px;top:244.31px;font-size:17px;font-weight:700;color:#3c3c3c;letter-spacing:-0.181px;transform:scaleX(0.9450);">Distressed Debt Fund</span>
<span class="a" style="left:1346.65px;top:233.51px;font-size:17px;font-weight:700;color:#444;letter-spacing:-0.04px;transform:scaleX(0.9450);">Capital Call</span>
<div class="row" style="top:274.0px"></div>
<svg class="abs" style="left:23.7px;top:282.9px;filter:drop-shadow(0 .5px .8px rgba(0,0,0,.13))" width="38" height="53.5" viewBox="0 0 38 53.5"><rect x=".5" y=".5" width="37" height="52.5" rx="1.500" fill="#fff" stroke="#e4e4e4"/><circle cx="19" cy="5.500" r="2.300" fill="#dbe7f5" stroke="#8fb2de" stroke-width=".8"/><rect x="10" y="9.2" width="18" height="1" fill="#a9c3e6"/><rect x="14.5" y="14" width="8.5" height="1.5" fill="#2b2b2b"/><rect x="5" y="18" width="5" height="0.8" fill="#cfd3da"/><rect x="27" y="18" width="6" height="0.8" fill="#dfe2e7"/><rect x="5" y="20.5" width="5" height="0.8" fill="#cfd3da"/><rect x="27" y="20.5" width="6" height="0.8" fill="#dfe2e7"/><rect x="5" y="23" width="5" height="0.8" fill="#cfd3da"/><rect x="27" y="23" width="6" height="0.8" fill="#dfe2e7"/><rect x="5" y="25.5" width="5" height="0.8" fill="#cfd3da"/><rect x="27" y="25.5" width="6" height="0.8" fill="#dfe2e7"/><rect x="14" y="30" width="9" height="0.8" fill="#d5e2f2"/><rect x="5" y="34" width="8" height="0.8" fill="#cfd3da"/><rect x="5" y="36" width="11" height="0.8" fill="#cfd3da"/><rect x="5" y="38" width="9" height="0.8" fill="#cfd3da"/><rect x="27" y="34" width="6" height="0.8" fill="#dfe2e7"/><rect x="27" y="36" width="4" height="0.8" fill="#dfe2e7"/><rect x="12" y="41.5" width="12" height="0.8" fill="#d5e2f2"/><rect x="4.5" y="45" width="21" height="0.8" fill="#dfe2e7"/><rect x="4.5" y="47" width="25" height="0.8" fill="#dfe2e7"/><rect x="4.5" y="50" width="29" height="0.8" fill="#dfe2e7"/></svg>
<a class="a" style="left:75.9px;top:298.65px;font-size:16.6px;color:#2c447c;letter-spacing:0.626px;transform:scaleX(0.9450);">Demo/Capital Call/Di…</a>
<span class="a du" style="left:333.35px;top:289.68px;font-size:16.8px;color:#484848;letter-spacing:0.418px;transform:scaleX(1.0015);">2024-07-04</span>
<span class="a du" style="left:359.15px;top:313.06px;font-size:16px;color:#7c7c7c;letter-spacing:0.258px;transform:scaleX(1.0015);">12:06pm</span>
<div class="badge" style="left:649.0px;top:294.0px;width:112.4px;background:#fce4e3"></div><svg class="abs" style="left:657.4px;top:301.4px" width="16" height="16" viewBox="0 0 16 16"><circle cx="8" cy="8" r="7.200" fill="#9a2a20"/><rect x="7.300" y="4" width="1.400" height="4.800" rx=".6" fill="#fff3f1"/><circle cx="8" cy="11" r=".95" fill="#fff3f1"/></svg><span class="a" style="left:678.15px;top:301.21px;font-size:17px;font-weight:700;color:#9a2a20;letter-spacing:0.432px;transform:scaleX(0.9450);">Attention</span>
<div class="badge" style="left:817.3px;top:294.0px;width:105.6px;background:#fce4e3"></div><svg class="abs" style="left:825.7px;top:301.4px" width="16" height="16" viewBox="0 0 16 16"><circle cx="8" cy="8" r="7.200" fill="#9a2a20"/><rect x="7.300" y="4" width="1.400" height="4.800" rx=".6" fill="#fff3f1"/><circle cx="8" cy="11" r=".95" fill="#fff3f1"/></svg><span class="a" style="left:846.45px;top:301.21px;font-size:17px;font-weight:700;color:#9a2a20;letter-spacing:-0.205px;transform:scaleX(0.9450);">Anomaly</span>
<span class="a" style="left:1058.15px;top:291.43px;font-size:15.8px;color:#7d7d7d;letter-spacing:0.436px;transform:scaleX(0.9450);-webkit-text-stroke:.3px #7d7d7d;">Assets/</span>
<span class="a" style="left:1057.2px;top:311.61px;font-size:17px;font-weight:700;color:#3c3c3c;letter-spacing:-0.181px;transform:scaleX(0.9450);">Distressed Debt Fund</span>
<span class="a" style="left:1346.65px;top:300.81px;font-size:17px;font-weight:700;color:#444;letter-spacing:-0.04px;transform:scaleX(0.9450);">Capital Call</span>
<div class="row" style="top:342.0px"></div>
<svg class="abs" style="left:23.7px;top:351.7px;filter:drop-shadow(0 .5px .8px rgba(0,0,0,.13))" width="38" height="49.3" viewBox="0 0 38 49.3"><rect x=".5" y=".5" width="37" height="48.3" rx="1.500" fill="#fff" stroke="#e4e4e4"/><circle cx="6.800" cy="5" r="2" fill="#d9efe9" stroke="#3f9e8f" stroke-width="1.300"/><rect x="5" y="8.5" width="8" height="0.8" fill="#dfe2e7"/><rect x="22" y="5.5" width="12" height="0.8" fill="#dfe2e7"/><rect x="3.300" y="12.300" width="31.400" height="1.900" fill="#2a2523"/><rect x="3.300" y="14.200" width="31.400" height="7.800" fill="#efd7cb"/><rect x="4" y="16.5" width="22" height="0.8" fill="#bfa79d"/><rect x="4" y="18.5" width="24" height="1" fill="#8c7b76"/><rect x="4" y="20.5" width="9" height="0.8" fill="#bfa79d"/><rect x="29" y="18.5" width="5" height="1" fill="#8c7b76"/><rect x="3.300" y="26.500" width="31.400" height="1.900" fill="#151312"/><rect x="3.300" y="28.400" width="31.400" height="6.800" fill="#efd7cb"/><rect x="4" y="30.5" width="20" height="0.8" fill="#d3bdb3"/><rect x="28" y="33" width="5" height="0.8" fill="#bfa79d"/></svg>
<a class="a" style="left:75.9px;top:366.05px;font-size:16.6px;color:#2c447c;letter-spacing:0.441px;transform:scaleX(0.9450);">Exploration Technolog…</a>
<span class="a du" style="left:333.35px;top:357.08px;font-size:16.8px;color:#484848;letter-spacing:0.418px;transform:scaleX(1.0015);">2024-05-21</span>
<span class="a du" style="left:369.65px;top:380.46px;font-size:16px;color:#7c7c7c;letter-spacing:-0.006px;transform:scaleX(1.0015);">3:03pm</span>
<div class="badge" style="left:649.0px;top:361.4px;width:78.8px;background:#e0eeed"></div><svg class="abs" style="left:657.4px;top:368.8px" width="16" height="16" viewBox="0 0 16 16"><circle cx="8" cy="8" r="7.200" fill="#42656a"/><path d="M5 8.300l2 2 4-4.200" fill="none" stroke="#f2fafa" stroke-width="1.350" stroke-linecap="round" stroke-linejoin="round"/></svg><span class="a" style="left:677.21px;top:368.61px;font-size:17px;font-weight:700;color:#42656a;letter-spacing:0.426px;transform:scaleX(0.9450);">Done</span>
<div class="badge" style="left:817.3px;top:361.4px;width:112.4px;background:#e0eeed"></div><svg class="abs" style="left:825.7px;top:368.8px" width="16" height="16" viewBox="0 0 16 16"><circle cx="8" cy="8" r="7.200" fill="#42656a"/><path d="M5 8.300l2 2 4-4.200" fill="none" stroke="#f2fafa" stroke-width="1.350" stroke-linecap="round" stroke-linejoin="round"/></svg><span class="a" style="left:845.5px;top:368.61px;font-size:17px;font-weight:700;color:#42656a;letter-spacing:-0.232px;transform:scaleX(0.9450);">Published</span>
<span class="a" style="left:1058.15px;top:358.83px;font-size:15.8px;color:#7d7d7d;letter-spacing:0.436px;transform:scaleX(0.9450);-webkit-text-stroke:.3px #7d7d7d;">Assets/</span>
<span class="a" style="left:1057.2px;top:379.01px;font-size:17px;font-weight:700;color:#3c3c3c;letter-spacing:-0.185px;transform:scaleX(0.9450);">Exploration Technologies II</span>
<span class="a" style="left:1345.7px;top:368.21px;font-size:17px;font-weight:700;color:#444;letter-spacing:0.031px;transform:scaleX(0.9450);">Investor Statement</span>
<div class="row" style="top:409.0px"></div>
<svg class="abs" style="left:23.7px;top:418.5px;filter:drop-shadow(0 .5px .8px rgba(0,0,0,.13))" width="38" height="40.0" viewBox="0 0 38 40.0"><rect x=".5" y=".5" width="37" height="39.0" rx="1.500" fill="#fff" stroke="#e4e4e4"/><rect x="4.5" y="4.5" width="10" height="1" fill="#b7bcc6"/><rect x="4.5" y="6.5" width="7" height="0.8" fill="#dfe2e7"/><rect x="4.5" y="10" width="7" height="0.8" fill="#cfd3da"/><rect x="4.5" y="11.6" width="29" height="0.8" fill="#dfe2e7"/><rect x="29" y="10" width="4.5" height="0.8" fill="#cfd3da"/><rect x="4.5" y="13.5" width="7" height="0.8" fill="#cfd3da"/><rect x="4.5" y="15.1" width="29" height="0.8" fill="#dfe2e7"/><rect x="29" y="13.5" width="4.5" height="0.8" fill="#cfd3da"/><rect x="4.5" y="17.5" width="7" height="0.8" fill="#cfd3da"/><rect x="4.5" y="19.1" width="29" height="0.8" fill="#dfe2e7"/><rect x="29" y="17.5" width="4.5" height="0.8" fill="#cfd3da"/><rect x="4.5" y="20.5" width="7" height="0.8" fill="#cfd3da"/><rect x="4.5" y="22.1" width="29" height="0.8" fill="#dfe2e7"/><rect x="29" y="20.5" width="4.5" height="0.8" fill="#cfd3da"/><rect x="4.5" y="24.5" width="8" height="1" fill="#cfd3da"/><rect x="4.5" y="27.5" width="17" height="0.8" fill="#dfe2e7"/></svg>
</section>
</body></html>
